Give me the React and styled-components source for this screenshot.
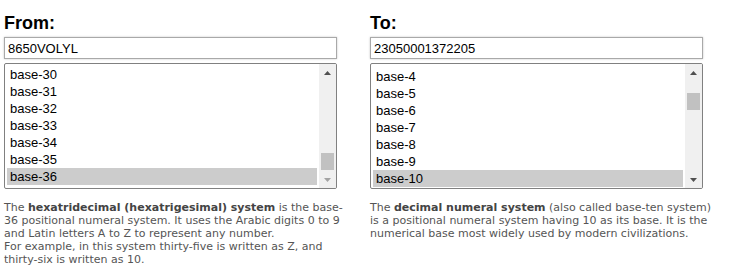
import React from "react";
import styled, { createGlobalStyle } from "styled-components";

const Global = createGlobalStyle`
  html, body { margin: 0; padding: 0; background: #fff; }
  body { font-family: "Liberation Sans", Arial, sans-serif; }
`;

const Page = styled.div`
  display: grid;
  grid-template-columns: 350px 350px;
  column-gap: 16px;
  padding: 13px 0 0 4px;
`;

const Column = styled.div`
  display: flex;
  flex-direction: column;
`;

const Heading = styled.h2`
  margin: 0 0 3px;
  font-family: "Liberation Sans", Arial, sans-serif;
  font-weight: bold;
  font-size: 18px;
  line-height: 21px;
  color: #000;
`;

const Input = styled.input`
  box-sizing: border-box;
  width: 333px;
  height: 22px;
  margin: 0;
  padding: 1px 3px 0;
  border: 1px solid #a9a9a9;
  box-shadow: 0 0 2px rgba(0, 0, 0, 0.22);
  font-family: "Liberation Sans", Arial, sans-serif;
  font-size: 13px;
  color: #000;
  background: #fff;
  outline: none;
`;

const ListBox = styled.div`
  box-sizing: border-box;
  width: 333px;
  height: 126px;
  margin-top: 4px;
  border: 1px solid #808080;
  border-radius: 2px;
  display: flex;
  overflow: hidden;
  background: #fff;
`;

const Rows = styled.div`
  flex: 1;
  padding: ${(p) => p.$top}px 2px 0 2px;
  display: flex;
  flex-direction: column;
  overflow: hidden;
`;

const Row = styled.div`
  flex: none;
  height: 17px;
  line-height: 17px;
  padding-left: 3px;
  font-family: "Liberation Sans", Arial, sans-serif;
  font-size: 13px;
  color: #000;
  background: ${(p) => (p.$selected ? "#cccccc" : "transparent")};
`;

const Scrollbar = styled.div`
  flex: none;
  width: 17px;
  background: #f0f0f0;
  display: flex;
  flex-direction: column;
`;

const ArrowButton = styled.div`
  flex: none;
  height: 17px;
  display: flex;
  align-items: center;
  justify-content: center;
`;

const Track = styled.div`
  flex: 1;
  display: flex;
  flex-direction: column;
`;

const Thumb = styled.div`
  flex: none;
  margin: ${(p) => p.$offset}px 2px 0;
  height: 17px;
  background: #c1c1c1;
`;

const Description = styled.p`
  margin: 12px 0 0;
  font-family: "DejaVu Sans", Verdana, sans-serif;
  font-size: 11px;
  line-height: 13px;
  color: #555;
  white-space: nowrap;

  b {
    color: #444;
  }
`;

const Arrow = ({ up, color }) => (
  <svg width="7" height="4" viewBox="0 0 7 4">
    <polygon points={up ? "0,4 7,4 3.5,0" : "0,0 7,0 3.5,4"} fill={color} />
  </svg>
);

const Select = ({ items, selected, top, thumbOffset, downDisabled }) => (
  <ListBox>
    <Rows $top={top}>
      {items.map((it) => (
        <Row key={it} $selected={it === selected}>
          {it}
        </Row>
      ))}
    </Rows>
    <Scrollbar>
      <ArrowButton>
        <Arrow up color="#505050" />
      </ArrowButton>
      <Track>
        <Thumb $offset={thumbOffset} />
      </Track>
      <ArrowButton>
        <Arrow color={downDisabled ? "#a3a3a3" : "#505050"} />
      </ArrowButton>
    </Scrollbar>
  </ListBox>
);

const fromItems = ["base-30", "base-31", "base-32", "base-33", "base-34", "base-35", "base-36"];
const toItems = ["base-4", "base-5", "base-6", "base-7", "base-8", "base-9", "base-10"];

export default function App() {
  return (
    <>
      <Global />
      <Page>
        <Column>
          <Heading>From:</Heading>
          <Input defaultValue="8650VOLYL" />
          <Select items={fromItems} selected="base-36" top={2} thumbOffset={72} downDisabled />
          <Description>
            The <b>hexatridecimal (hexatrigesimal) system</b> is the base-
            <br />
            36 positional numeral system. It uses the Arabic digits 0 to 9
            <br />
            and Latin letters A to Z to represent any number.
            <br />
            For example, in this system thirty-five is written as Z, and
            <br />
            thirty-six is written as 10.
          </Description>
        </Column>
        <Column>
          <Heading>To:</Heading>
          <Input defaultValue="23050001372205" />
          <Select items={toItems} selected="base-10" top={4} thumbOffset={12} />
          <Description>
            The <b>decimal numeral system</b> (also called base-ten system)
            <br />
            is a positional numeral system having 10 as its base. It is the
            <br />
            numerical base most widely used by modern civilizations.
          </Description>
        </Column>
      </Page>
    </>
  );
}
